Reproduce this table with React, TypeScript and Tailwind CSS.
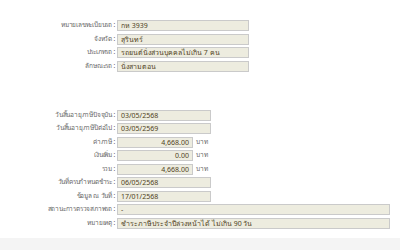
const font = { fontFamily: "Tahoma, 'Noto Sans', 'DejaVu Sans', sans-serif" };

type Row = { label: string; value: string; kind: "mid" | "date" | "money" | "full" };

const top: Row[] = [
  { label: "หมายเลขทะเบียนรถ :", value: "กห 3939", kind: "mid" },
  { label: "จังหวัด :", value: "สุรินทร์", kind: "mid" },
  { label: "ประเภทรถ :", value: "รถยนต์นั่งส่วนบุคคลไม่เกิน 7 คน", kind: "mid" },
  { label: "ลักษณะรถ :", value: "นั่งสามตอน", kind: "mid" },
];

const bottom: Row[] = [
  { label: "วันสิ้นอายุภาษีปัจจุบัน :", value: "03/05/2568", kind: "date" },
  { label: "วันสิ้นอายุภาษีปีต่อไป :", value: "03/05/2569", kind: "date" },
  { label: "ค่าภาษี :", value: "4,668.00", kind: "money" },
  { label: "เงินเพิ่ม :", value: "0.00", kind: "money" },
  { label: "รวม :", value: "4,668.00", kind: "money" },
  { label: "วันที่ครบกำหนดชำระ :", value: "06/05/2568", kind: "date" },
  { label: "ข้อมูล ณ วันที่ :", value: "17/01/2568", kind: "date" },
  { label: "สถานะการตรวจสภาพรถ :", value: "-", kind: "full" },
  { label: "หมายเหตุ :", value: "ชำระภาษีประจำปีล่วงหน้าได้ ไม่เกิน 90 วัน", kind: "full" },
];

function Field({ row }: { row: Row }) {
  const box =
    "h-[11px] border border-[#cacaca] bg-[#edecdf] px-[3px] flex items-center text-[#4f4222] whitespace-nowrap overflow-hidden";
  return (
    <div className="flex items-center h-[11px]">
      <div className="w-[117px] shrink-0 pr-[2px] text-right text-[6.5px] tracking-[-0.2px] text-[#666] whitespace-nowrap">
        {row.label}
      </div>
      {row.kind === "mid" && <div className={`${box} w-[132px]`}>{row.value}</div>}
      {row.kind === "date" && <div className={`${box} w-[94px]`}>{row.value}</div>}
      {row.kind === "full" && <div className={`${box} w-[273px]`}>{row.value}</div>}
      {row.kind === "money" && (
        <>
          <div className={`${box} w-[76px] justify-end`}>{row.value}</div>
          <span className="ml-[3px] text-[6.5px] text-[#666]">บาท</span>
        </>
      )}
    </div>
  );
}

export default function App() {
  return (
    <div className="w-[400px] h-[250px] bg-white flex flex-col text-[7px] leading-none overflow-hidden" style={font}>
      <div className="flex flex-col gap-[2.5px] pt-[20px]">
        {top.map((r) => (
          <Field key={r.label} row={r} />
        ))}
      </div>
      <div className="flex flex-col gap-[2.5px] mt-[38px]">
        {bottom.map((r) => (
          <Field key={r.label} row={r} />
        ))}
      </div>
      <div className="mt-auto h-[12px] bg-[#f4f4f4]" />
    </div>
  );
}
